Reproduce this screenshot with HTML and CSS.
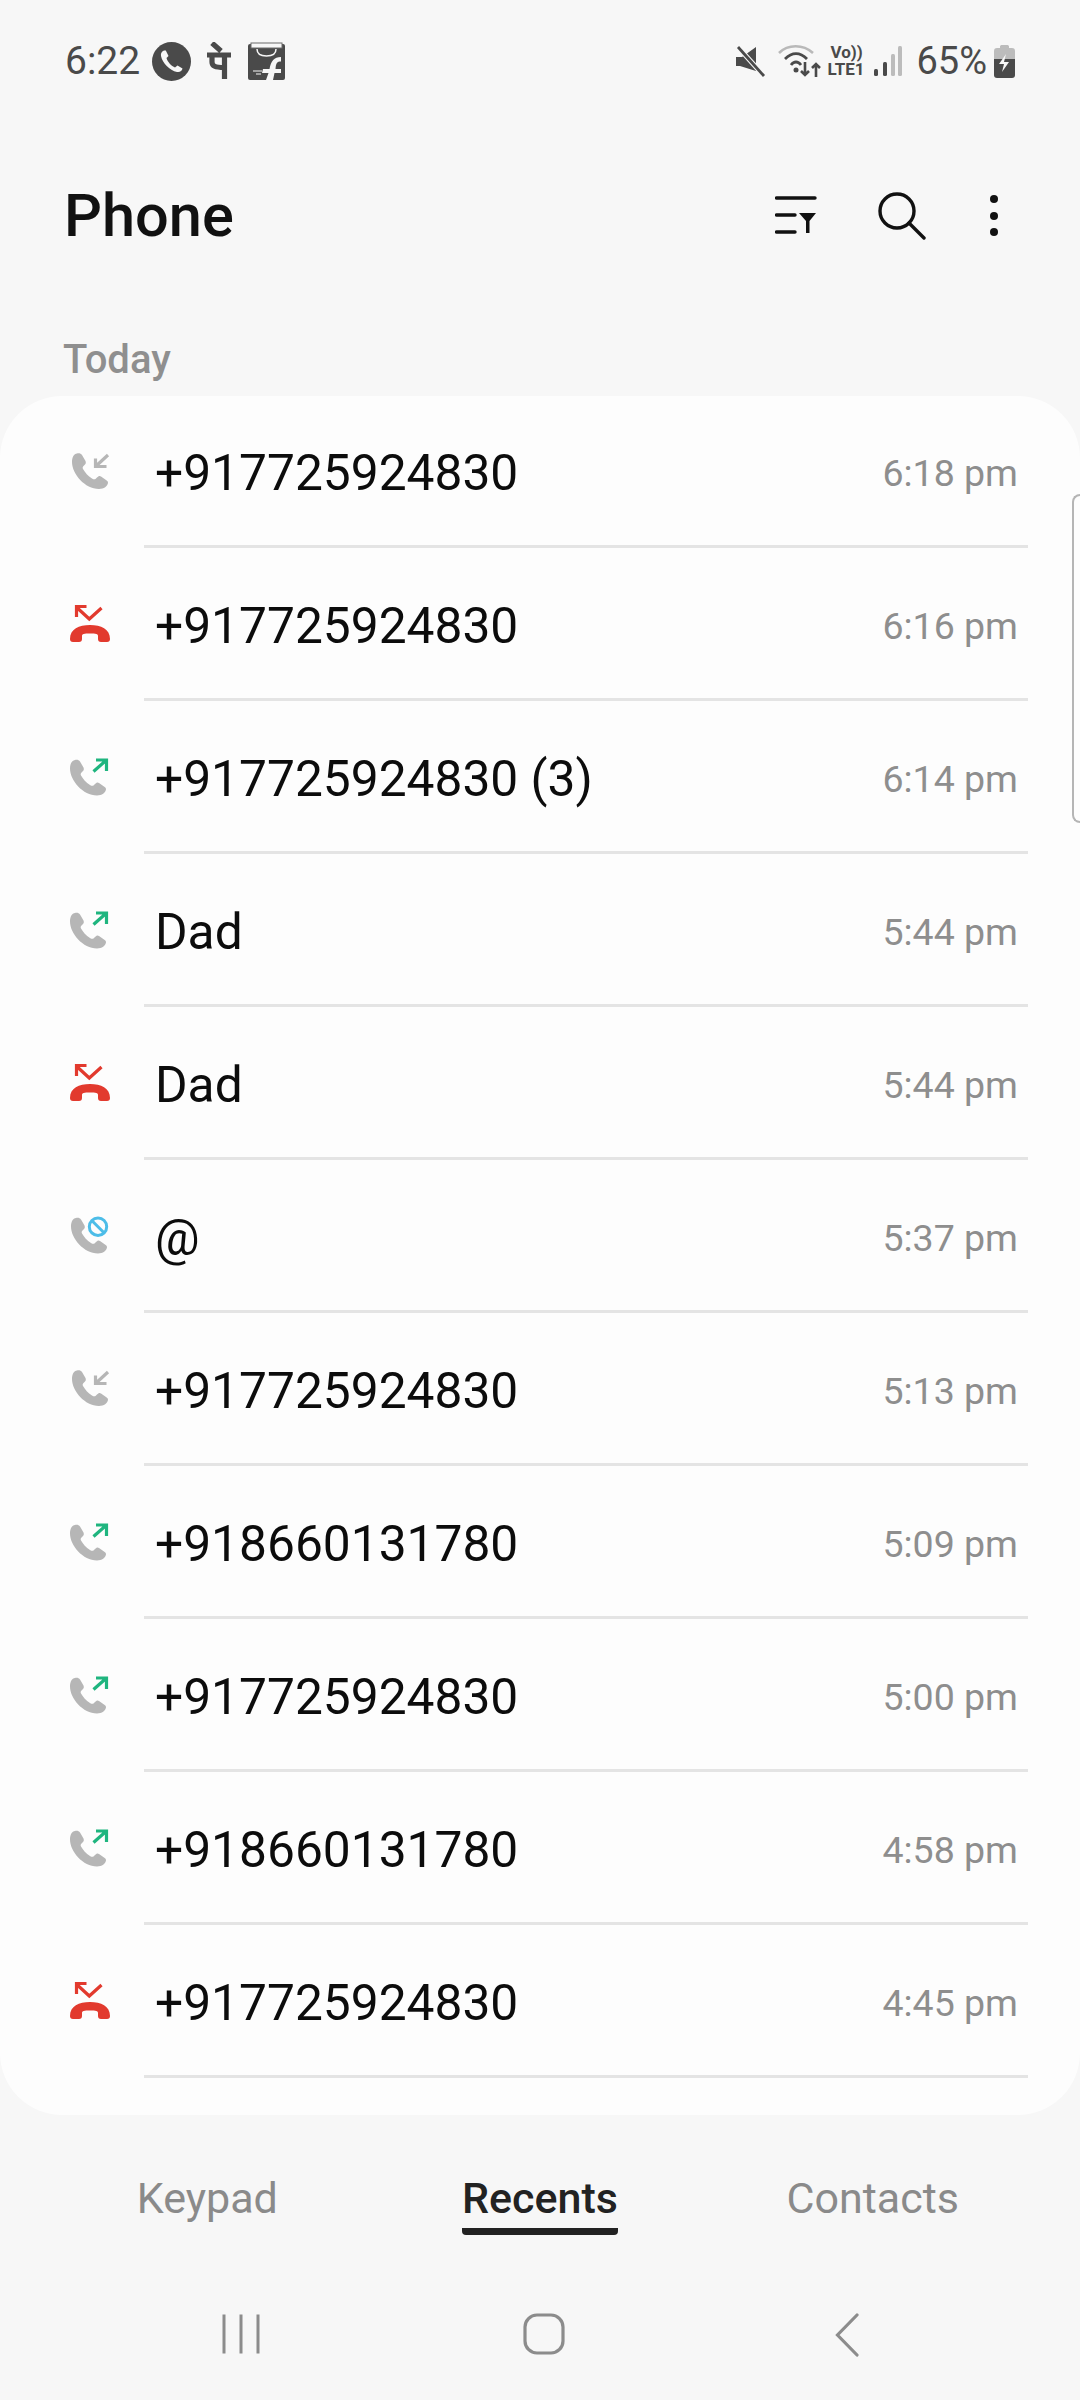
FILE: index.html
```html
<!DOCTYPE html>
<html lang="en">
<head>
    <meta charset="UTF-8">
    <meta name="viewport" content="width=device-width, initial-scale=1.0">
    <title>Phone</title>
    <link rel="stylesheet" href="styles.css">
</head>
<body>
    <!-- Shared call icons -->
    <svg class="sprites" width="0" height="0">
        <defs>
            <path id="handset" d="M9 3.5C6 4 4 7 4 12C4 24 17 39 31 39C36 39 39.5 36 40 33C40 31.5 39.5 31 38 30L33 26.5C31.5 25.5 30.5 26 29 27.5L27.5 29C26.5 29.5 25.5 29.5 24 28.5C20 26 17 22.5 15 19C14.5 18 14.5 17 15.5 16L17 14.5C18 13.5 18 12.5 17.5 11L14 5C13 3.5 11 3 9 3.5Z"/>
            <symbol id="call-in" viewBox="0 0 44 44">
                <use href="#handset" fill="#b6b6b6"/>
                <path d="M40 5L27.5 16.5M27.5 8.5V16.5H38.5" fill="none" stroke="#b6b6b6" stroke-width="3.2"/>
            </symbol>
            <symbol id="call-out" viewBox="0 0 44 44">
                <use href="#handset" fill="#b6b6b6" transform="translate(-2 1.5)"/>
                <path d="M25.5 16.5L38.5 5M28 5H38.5V16" fill="none" stroke="#1fb57f" stroke-width="3.2"/>
            </symbol>
            <symbol id="call-missed" viewBox="0 0 44 44">
                <path d="M2 37C2 27 11 23 22 23C33 23 42 27 42 37C42 39 41 40 39 40L33 40C31 40 30 39 30 37L30 34C30 32 28 31.5 22 31.5C16 31.5 14 32 14 34L14 37C14 39 13 40 11 40L5 40C3 40 2 39 2 37Z" fill="#e23a2e"/>
                <path d="M33.5 6L21.3 17L8.8 5.5M8.5 15V4.5H18.5" fill="none" stroke="#e23a2e" stroke-width="3.2"/>
            </symbol>
            <symbol id="call-blocked" viewBox="0 0 44 44">
                <use href="#handset" fill="#b6b6b6" transform="translate(-1 0.5)"/>
                <circle cx="30" cy="12.7" r="10.5" fill="#fdfdfd"/>
                <circle cx="30" cy="12.7" r="8.7" fill="none" stroke="#4dbde8" stroke-width="3"/>
                <path d="M24 6.7L36 18.7" stroke="#4dbde8" stroke-width="3"/>
            </symbol>
        </defs>
    </svg>

    <!-- Status bar -->
    <div class="status-bar">
        <div class="status-left">
            <span class="clock">6:22</span>
            <svg class="ic-call" width="39" height="39" viewBox="0 0 39 39">
                <circle cx="19.5" cy="19.5" r="19.5" fill="#4a4a4a"/>
                <path d="M12 8.5C10 9.5 8.5 11 9 14C10.5 21 17.5 28.5 25 30C28 30.5 30 29 30.5 26.5L25.5 23.5L23 25.5C19.5 24 15.5 20 14.5 16L16.5 14L13.8 8.5Z" fill="#f7f7f7"/>
            </svg>
            <svg class="ic-pe" width="26" height="38" viewBox="0 0 26 38">
                <path d="M1 13H25M18.500 13V37M6 14V20C6 24 9 25.500 18 25.500M6 1L15 9" fill="none" stroke="#4a4a4a" stroke-width="5.200"/>
            </svg>
            <svg class="ic-bag" width="37" height="38" viewBox="0 0 37 38">
                <rect y="2" width="37" height="36" rx="2" fill="#4a4a4a"/>
                <rect x="3" y="1" width="31" height="5" fill="#f7f7f7" stroke="#6a6a6a"/>
                <path d="M9 7C9 12 12 14 18.500 14C25 14 28 12 28 7" fill="none" stroke="#f7f7f7" stroke-width="1.500"/>
                <path d="M18 38L20.500 31H14L15 27H21.500C23 19 26 15 33 15V19.500C29 19.500 28 21 27.500 27H33V31H26.500L25 38Z" fill="#f7f7f7"/>
                <path d="M5 29H14M8 32H13" stroke="#f7f7f7" stroke-width="1.200"/>
            </svg>
        </div>
        <div class="status-right">
            <svg class="ic-mute" width="31" height="31" viewBox="0 0 31 31">
                <path d="M1 11H7L21 1V25L5 20H1Z" fill="#4a4a4a"/>
                <path d="M3 1L29 30" stroke="#f7f7f7" stroke-width="5"/>
                <path d="M3 1L29 30" stroke="#4a4a4a" stroke-width="2.800"/>
            </svg>
            <svg class="ic-wifi" width="44" height="34" viewBox="0 0 44 34">
                <path d="M1 9C10 0 25 0 35 9" fill="none" stroke="#b9b9b9" stroke-width="2.600"/>
                <path d="M7 15C14 8 22 8 29 15M13 21C16 17 20 17 23 21" fill="none" stroke="#4a4a4a" stroke-width="2.800"/>
                <circle cx="18" cy="26" r="2.500" fill="#4a4a4a"/>
                <path d="M27 18V31M23 27L27 31L31 27M38 33V20M34 24L38 20L42 24" fill="none" stroke="#4a4a4a" stroke-width="2.600"/>
            </svg>
            <div class="volte"><span>Vo))</span><span>LTE1</span></div>
            <svg class="ic-signal" width="28" height="30" viewBox="0 0 28 30">
                <rect x="0" y="23" width="4" height="7" rx="1.500" fill="#4a4a4a"/>
                <rect x="9" y="16" width="4" height="14" rx="1.500" fill="#4a4a4a"/>
                <rect x="17" y="8" width="4" height="22" rx="1.500" fill="#bcbcbc"/>
                <rect x="24" y="0" width="4" height="30" rx="1.500" fill="#bcbcbc"/>
            </svg>
            <span class="battery-pct">65%</span>
            <svg class="ic-battery" width="21" height="33" viewBox="0 0 21 33">
                <path d="M6 3V1.500C6 .5 7 0 8 0H13C14 0 15 .5 15 1.500V3H18C20 3 21 4 21 6V14H0V6C0 4 1 3 3 3Z" fill="#bcbcbc"/>
                <path d="M0 14H21V30C21 32 20 33 18 33H3C1 33 0 32 0 30Z" fill="#4a4a4a"/>
                <path d="M12 9L5 19H10L8 27L15 17H10Z" fill="#f7f7f7"/>
            </svg>
        </div>
    </div>

    <!-- Title bar -->
    <div class="app-header">
        <h1>Phone</h1>
        <div class="header-actions">
            <svg width="42" height="40" viewBox="0 0 42 40">
                <path d="M1.500 2H40M1.500 19H20M1.500 36H20" fill="none" stroke="#111" stroke-width="3.400" stroke-linecap="round"/>
                <path d="M24 17H41L34.500 25V37H31V25Z" fill="#111"/>
            </svg>
            <svg class="ic-search" width="50" height="48" viewBox="0 0 50 48">
                <circle cx="19" cy="19" r="17" fill="none" stroke="#111" stroke-width="3.400"/>
                <path d="M31 31L46 46" stroke="#111" stroke-width="3.400" stroke-linecap="round"/>
            </svg>
            <svg class="ic-more" width="10" height="44" viewBox="0 0 10 44">
                <circle cx="5" cy="5" r="4" fill="#111"/>
                <circle cx="5" cy="22" r="4" fill="#111"/>
                <circle cx="5" cy="38" r="4" fill="#111"/>
            </svg>
        </div>
    </div>

    <div class="day-label">Today</div>

    <!-- Call log -->
    <div class="call-card">
        <div class="call-row"><div class="call-icon"><svg width="44" height="44"><use href="#call-in"/></svg></div><div class="call-body"><span class="call-name">+917725924830</span><span class="call-time">6:18 pm</span></div></div>
        <div class="call-row"><div class="call-icon"><svg width="44" height="44"><use href="#call-missed"/></svg></div><div class="call-body"><span class="call-name">+917725924830</span><span class="call-time">6:16 pm</span></div></div>
        <div class="call-row"><div class="call-icon"><svg width="44" height="44"><use href="#call-out"/></svg></div><div class="call-body"><span class="call-name">+917725924830 (3)</span><span class="call-time">6:14 pm</span></div></div>
        <div class="call-row"><div class="call-icon"><svg width="44" height="44"><use href="#call-out"/></svg></div><div class="call-body"><span class="call-name">Dad</span><span class="call-time">5:44 pm</span></div></div>
        <div class="call-row"><div class="call-icon"><svg width="44" height="44"><use href="#call-missed"/></svg></div><div class="call-body"><span class="call-name">Dad</span><span class="call-time">5:44 pm</span></div></div>
        <div class="call-row"><div class="call-icon"><svg width="44" height="44"><use href="#call-blocked"/></svg></div><div class="call-body"><span class="call-name">@</span><span class="call-time">5:37 pm</span></div></div>
        <div class="call-row"><div class="call-icon"><svg width="44" height="44"><use href="#call-in"/></svg></div><div class="call-body"><span class="call-name">+917725924830</span><span class="call-time">5:13 pm</span></div></div>
        <div class="call-row"><div class="call-icon"><svg width="44" height="44"><use href="#call-out"/></svg></div><div class="call-body"><span class="call-name">+918660131780</span><span class="call-time">5:09 pm</span></div></div>
        <div class="call-row"><div class="call-icon"><svg width="44" height="44"><use href="#call-out"/></svg></div><div class="call-body"><span class="call-name">+917725924830</span><span class="call-time">5:00 pm</span></div></div>
        <div class="call-row"><div class="call-icon"><svg width="44" height="44"><use href="#call-out"/></svg></div><div class="call-body"><span class="call-name">+918660131780</span><span class="call-time">4:58 pm</span></div></div>
        <div class="call-row"><div class="call-icon"><svg width="44" height="44"><use href="#call-missed"/></svg></div><div class="call-body"><span class="call-name">+917725924830</span><span class="call-time">4:45 pm</span></div></div>
    </div>

    <div class="scroll-handle"></div>

    <!-- Bottom tabs -->
    <div class="tab-bar">
        <div class="tab"><span>Keypad</span></div>
        <div class="tab active"><span>Recents</span></div>
        <div class="tab"><span>Contacts</span></div>
    </div>

    <!-- Navigation bar -->
    <div class="nav-bar">
        <div class="nav-item">
            <svg width="38" height="42" viewBox="0 0 38 42">
                <path d="M2 1.500V40.500M19 1.500V40.500M36 1.500V40.500" fill="none" stroke="#8c8c8c" stroke-width="3"/>
            </svg>
        </div>
        <div class="nav-item">
            <svg width="42" height="42" viewBox="0 0 42 42">
                <rect x="2" y="2" width="38" height="38" rx="12" fill="none" stroke="#8c8c8c" stroke-width="3.200"/>
            </svg>
        </div>
        <div class="nav-item">
            <svg width="24" height="44" viewBox="0 0 24 44">
                <path d="M22 2L2.500 22L22 42" fill="none" stroke="#8c8c8c" stroke-width="3.200" stroke-linecap="round"/>
            </svg>
        </div>
    </div>
</body>
</html>
```

FILE: styles.css
```css
* {
    box-sizing: border-box;
}

body {
    font-family: 'Roboto', 'Liberation Sans', sans-serif;
    background-color: #f7f7f7;
    margin: 0;
    width: 1080px;
    height: 2400px;
    overflow: hidden;
    position: relative;
}

.sprites {
    display: block;
    position: absolute;
}

/* Status bar */
.status-bar {
    height: 122px;
    padding: 0 65px 0 65px;
    display: flex;
    justify-content: space-between;
    align-items: center;
    color: #4a4a4a;
}

.status-left,
.status-right {
    display: flex;
    align-items: center;
}

.clock {
    font-size: 39px;
    width: 87px;
}

.ic-pe {
    margin-left: 15px;
}

.ic-bag {
    margin-left: 16px;
}

.ic-wifi {
    margin-left: 12px;
}

.volte {
    display: flex;
    flex-direction: column;
    font-size: 17px;
    font-weight: 700;
    line-height: 17px;
    margin-left: 5px;
    width: 40px;
}

.volte span:first-child {
    padding-left: 3px;
}

.ic-signal {
    margin-left: 7px;
}

.battery-pct {
    font-size: 38px;
    margin-left: 14px;
}

.ic-battery {
    margin-left: 7px;
}

/* Title bar */
.app-header {
    height: 190px;
    padding: 0 81px 2px 64px;
    display: flex;
    justify-content: space-between;
    align-items: center;
}

h1 {
    margin: 0;
    font-size: 59.5px;
    font-weight: 500;
    color: #111;
}

.header-actions {
    display: flex;
    align-items: center;
}

.ic-search {
    margin-left: 61px;
}

.ic-more {
    margin-left: 61px;
}

.day-label {
    height: 84px;
    padding: 24px 0 0 63px;
    font-size: 40px;
    font-weight: 500;
    color: #8f8f8f;
}

/* Call log */
.call-card {
    height: 1719px;
    background-color: #fdfdfd;
    border-radius: 62px;
    overflow: hidden;
}

.call-row {
    height: 153px;
    display: flex;
}

.call-row:first-child {
    height: 152px;
}

.call-icon {
    width: 144px;
    padding-left: 68px;
    display: flex;
    align-items: center;
}

.call-icon svg {
    display: block;
    margin-bottom: 1px;
}

.call-body {
    width: 884px;
    padding: 5px 10px 0 11px;
    display: flex;
    justify-content: space-between;
    align-items: center;
    border-bottom: 3px solid #e4e4e4;
}

.call-name {
    font-size: 49.7px;
    color: #0c0c0c;
}

.call-time {
    font-size: 37.5px;
    color: #8e8e8e;
}

.scroll-handle {
    position: absolute;
    top: 494px;
    left: 1072px;
    width: 8px;
    height: 329px;
    border: 2px solid #b5b5b5;
    border-right: none;
    border-radius: 10px 0 0 10px;
}

/* Bottom tabs */
.tab-bar {
    height: 135px;
    padding: 0 41px;
    display: flex;
}

.tab {
    flex: 1;
    text-align: center;
    padding-top: 57px;
    font-size: 43px;
    color: #8a8a8a;
}

.tab span {
    display: inline-block;
    padding-bottom: 4px;
    line-height: 52px;
    border-bottom: 7px solid transparent;
}

.tab.active {
    color: #222;
    font-weight: 500;
}

.tab.active span {
    border-bottom-color: #222;
    border-radius: 4px;
}

/* Navigation bar */
.nav-bar {
    height: 150px;
    padding: 0 82px 0 90px;
    display: flex;
}

.nav-item {
    flex: 1;
    display: flex;
    justify-content: center;
    padding-top: 63px;
}
```
